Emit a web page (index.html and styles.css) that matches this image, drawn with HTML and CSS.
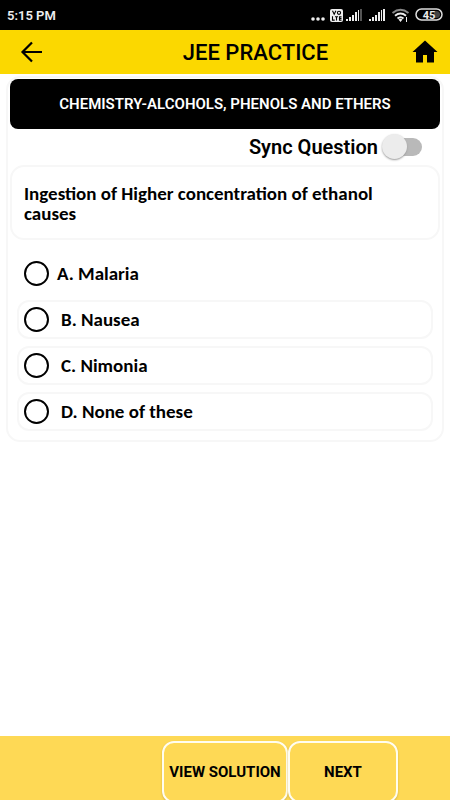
FILE: index.html
```html
<!DOCTYPE html>
<html lang="en">
<head>
<meta charset="utf-8">
<meta name="viewport" content="width=device-width, initial-scale=1">
<title>JEE Practice</title>
<link rel="stylesheet" href="styles.css">
</head>
<body>
<div class="status">
  <span class="time">5:15 PM</span>
  <svg class="status-icons" width="134" height="16" viewBox="0 0 134 16" fill="#eee" role="img" aria-label="Signal, Wi-Fi, battery 45">
    <circle cx="3" cy="12" r="1.800"/><circle cx="8" cy="12" r="1.800"/><circle cx="13" cy="12" r="1.800"/>
    <rect x="20" y="2" width="13" height="13" rx="2"/>
    <g fill="none" stroke="#000" stroke-width="1.100">
      <path d="M22.500 3.800l1.700 3.500 1.700-3.500"/><circle cx="29" cy="5.800" r="1.600"/>
      <path d="M22.500 9.200v3.900h2.200M25 9.700h3M26.500 9.700v3.900M31.500 9.700h-2v3.400h2M29.500 11.400h2"/>
    </g>
    <path d="M36 12h2v2h-2zM39 10h2v4h-2zM42 8h2v6h-2zM45 5h2v9h-2z"/>
    <path d="M48 3h1v11h-1z"/><path fill="#555" d="M50 2h2v12h-2z"/>
    <path d="M59 12h2v2h-2zM62 10h2v4h-2zM65 8h2v6h-2zM68 5h2v9h-2zM71 3h1v11h-1zM73 2h2v12h-2z"/>
    <g fill="none" stroke="#eee" stroke-width="1.900">
      <path stroke="#888" d="M82.500 6q8-6.500 16 0"/><path d="M85 8.800q5.500-4.500 11 0M87.500 11.500q3-2.500 6 0"/>
    </g>
    <path d="M88.500 12.500q2-1.500 4 0l-2 2.500zM96 10h1v5h-1z"/>
    <rect x="106" y="2" width="26" height="11" rx="5.500" fill="#000" stroke="#ddd" stroke-width="1.500"/>
    <path fill="#444" d="M124 4h2q4 0 4 3.500T126 11h-2z"/>
    <text class="battery" x="119" y="11.500" text-anchor="middle">45</text>
  </svg>
</div>
<header class="bar">
  <button class="icon-button" type="button" aria-label="Back">
    <svg width="24" height="24" viewBox="0 0 24 24" fill="none" stroke="#000" stroke-width="2.200"><path d="M23 12H3.500M13 2.500L3.500 12l9.500 9.500"/></svg>
  </button>
  <h1>JEE PRACTICE</h1>
  <button class="icon-button" type="button" aria-label="Home">
    <svg width="26" height="24" viewBox="0 0 26 24"><path d="M13 .5L.5 12H4v10.500h7V15h4v7.500h7V12h3.500z"/></svg>
  </button>
</header>
<main>
  <section class="card">
    <h2>CHEMISTRY-ALCOHOLS, PHENOLS AND ETHERS</h2>
    <label class="sync">Sync Question <input type="checkbox" role="switch"></label>
    <p class="question">Ingestion of Higher concentration of ethanol causes</p>
    <div class="options">
      <label class="option plain"><input type="radio" name="answer"><span>A. Malaria</span></label>
      <label class="option"><input type="radio" name="answer"><span>B. Nausea</span></label>
      <label class="option"><input type="radio" name="answer"><span>C. Nimonia</span></label>
      <label class="option"><input type="radio" name="answer"><span>D. None of these</span></label>
    </div>
  </section>
</main>
<footer>
  <button class="action wide" type="button">VIEW SOLUTION</button>
  <button class="action" type="button">NEXT</button>
</footer>
</body>
</html>
```

FILE: styles.css
```css
* { box-sizing: border-box; }

body {
  margin: 0;
  min-height: 100vh;
  display: flex;
  flex-direction: column;
  background: #fff;
  color: #000;
  font-family: Roboto, "Liberation Sans", sans-serif;
}

h1, h2, p { margin: 0; }

button { font: inherit; color: inherit; cursor: pointer; }

.status {
  height: 30px;
  padding: 0 6px 0 7px;
  display: flex;
  align-items: center;
  justify-content: space-between;
  background: #000;
  color: #eee;
}

.time { font-size: 13px; font-weight: 600; }

.battery { font-size: 11px; font-weight: 700; }

.bar {
  height: 44px;
  padding: 0 12px 0 19px;
  display: flex;
  align-items: center;
  background: #fbd800;
}

.bar h1 {
  flex: 1;
  padding-left: 56px;
  text-align: center;
  font-size: 22px;
  font-weight: 500;
}

.icon-button {
  display: flex;
  padding: 0;
  border: 0;
  background: none;
}

main { flex: 1; padding: 2px 6px; }

.card {
  padding: 1px 2px 9px;
  border: 2px solid #f7f7f7;
  border-radius: 14px;
}

.card h2 {
  height: 50px;
  display: flex;
  align-items: center;
  justify-content: center;
  border-radius: 8px;
  background: #000;
  color: #fff;
  font-size: 15px;
  font-weight: 600;
}

.sync {
  height: 36px;
  padding-right: 16px;
  display: flex;
  align-items: center;
  justify-content: flex-end;
  gap: 4px;
  font-size: 20px;
  font-weight: 600;
}

.sync input {
  appearance: none;
  position: relative;
  width: 42px;
  height: 26px;
  margin: 0;
}

.sync input::before {
  content: "";
  position: absolute;
  inset: 4px 2px 4px 6px;
  border-radius: 9px;
  background: #b9b9b9;
}

.sync input::after {
  content: "";
  position: absolute;
  top: 0;
  left: 0;
  width: 25px;
  height: 25px;
  border-radius: 50%;
  background: #ececec;
  box-shadow: 0 1px 2px #999;
}

.sync input:checked::after { left: 17px; }

.question {
  min-height: 75px;
  padding: 17px 12px 14px;
  border: 2px solid #f7f7f7;
  border-radius: 14px;
  font: 700 19px/20px Carlito, Lato, sans-serif;
}

.options {
  padding: 14px 7px 0;
  display: flex;
  flex-direction: column;
  gap: 7px;
}

.option {
  height: 39px;
  padding: 0 5px;
  display: flex;
  align-items: center;
  gap: 12px;
  border: 2px solid #f7f7f7;
  border-radius: 12px;
  font: 700 19px/20px Carlito, Lato, sans-serif;
}

.plain { border-color: transparent; gap: 8px; }

.option input {
  appearance: none;
  width: 25px;
  height: 25px;
  margin: 0;
  border: 2px solid #000;
  border-radius: 50%;
}

.option input:checked { background: radial-gradient(#000 45%, transparent 50%); }

footer {
  height: 64px;
  padding: 5px 52px 0 0;
  display: flex;
  justify-content: flex-end;
  overflow: hidden;
  background: #fed955;
}

.action {
  min-width: 110px;
  height: 62px;
  padding: 0 4px;
  border: 2px solid #fffdf0;
  border-radius: 12px;
  background: #fed955;
  box-shadow: 0 1px 2px #c9ac49;
  font-size: 15px;
  font-weight: 700;
}

.wide { min-width: 126px; }
```
